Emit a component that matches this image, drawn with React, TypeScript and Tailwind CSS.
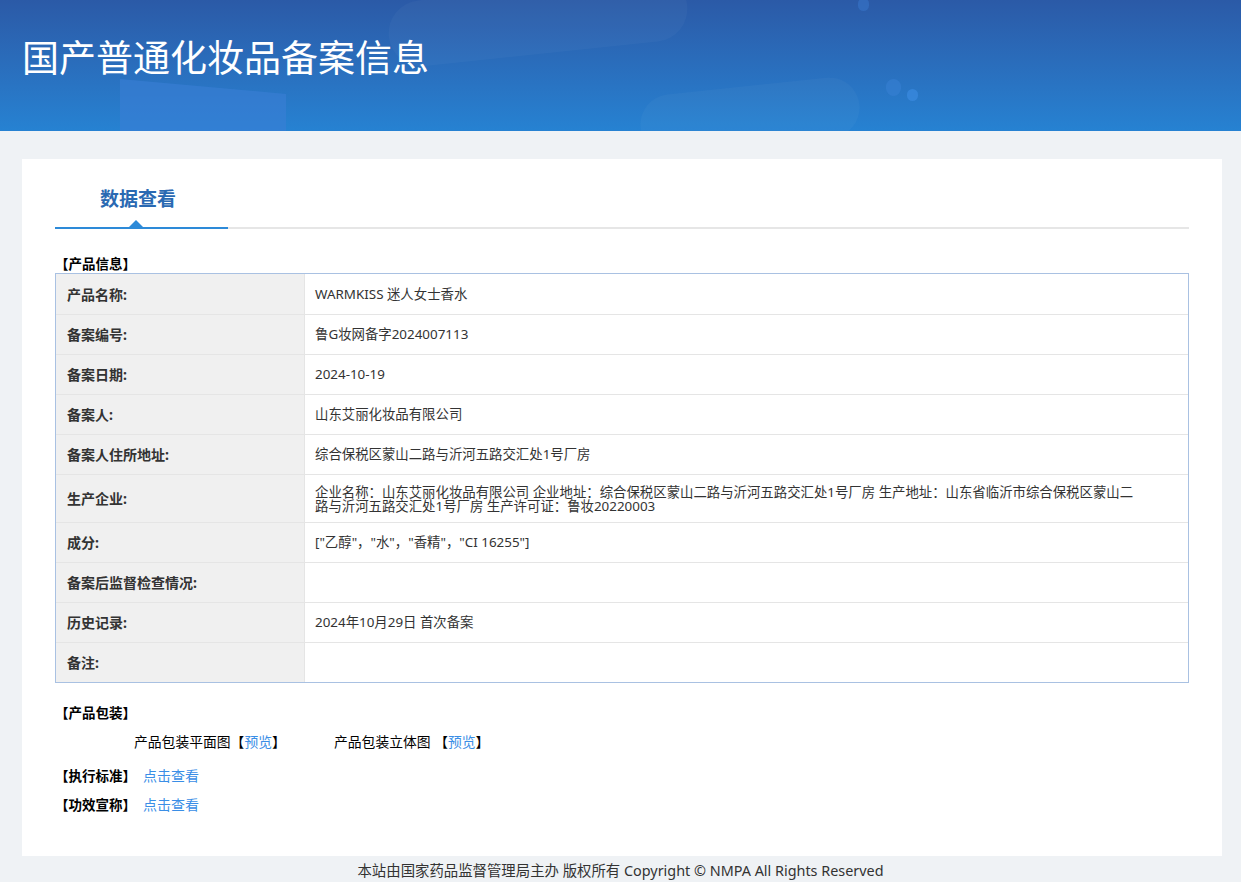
import React from "react";

const rows: { label: string; value: React.ReactNode; h?: string }[] = [
  { label: "产品名称:", value: "WARMKISS 迷人女士香水" },
  { label: "备案编号:", value: "鲁G妆网备字2024007113" },
  { label: "备案日期:", value: "2024-10-19" },
  { label: "备案人:", value: "山东艾丽化妆品有限公司" },
  { label: "备案人住所地址:", value: "综合保税区蒙山二路与沂河五路交汇处1号厂房" },
  {
    label: "生产企业:",
    value: (
      <span className="block leading-[14px]">
        企业名称：山东艾丽化妆品有限公司 企业地址：综合保税区蒙山二路与沂河五路交汇处1号厂房 生产地址：山东省临沂市综合保税区蒙山二
        <br />
        路与沂河五路交汇处1号厂房 生产许可证：鲁妆20220003
      </span>
    ),
    h: "h-[48px]",
  },
  { label: "成分:", value: '["乙醇"，"水"，"香精"，"CI 16255"]' },
  { label: "备案后监督检查情况:", value: "" },
  { label: "历史记录:", value: "2024年10月29日 首次备案" },
  { label: "备注:", value: "" },
];

export default function App() {
  return (
    <div
      className="min-h-[882px] bg-[#eff2f5] text-[#333]"
      style={{ fontFamily: '"Noto Sans", "Noto Sans CJK SC", sans-serif' }}
    >
      <header className="relative h-[131px] overflow-hidden bg-gradient-to-b from-[#2b5aa7] to-[#2682d2]">
        <div className="absolute left-[120px] top-[76px] h-[60px] w-[166px] bg-[#3b7fd6] opacity-60 [clip-path:polygon(0_5%,100%_30%,100%_100%,0_100%)]" />
        <div className="absolute left-[388px] top-[-12px] h-[66px] w-[300px] -rotate-6 rounded-full bg-white/[0.03]" />
        <div className="absolute left-[640px] top-[86px] h-[60px] w-[220px] -rotate-6 rounded-full bg-white/[0.03]" />
        <div className="absolute left-[886px] top-[79px] h-[17px] w-[15px] rounded-full bg-[#3a82d6]/50" />
        <div className="absolute left-[907px] top-[89px] h-[12px] w-[11px] rounded-full bg-[#3a8ae0]/70" />
        <div className="absolute left-[858px] top-[-2px] h-[13px] w-[11px] rounded-full bg-[#3a7ad0]/50" />
        <h1 className="relative pl-[22px] pt-[33px] text-[37px] font-normal leading-[50px] text-white">
          国产普通化妆品备案信息
        </h1>
      </header>

      <main className="ml-[22px] mt-[28px] h-[697px] w-[1200px] bg-white px-[33px] pt-[26px]">
        <div className="relative flex h-[44px] border-b-2 border-[#e6e6e6]">
          <div className="relative -mb-[2px] flex w-[173px] border-b-2 border-[#2d8ad8] pl-[45px]">
            <span className="text-[19px] font-bold leading-[28px] text-[#2a69b2]">数据查看</span>
            <span className="absolute bottom-0 left-[74px] h-0 w-0 border-x-[7px] border-b-[7px] border-x-transparent border-b-[#2d8ad8]" />
          </div>
        </div>

        <div className="mt-[26px] text-[13.5px] font-bold leading-[18px] text-black">【产品信息】</div>
        <div className="border border-[#a9c1e2]">
          {rows.map((r, i) => (
            <div
              key={i}
              className={`flex ${r.h ?? "h-[40px]"} ${i > 0 ? "border-t border-[#e5e5e5]" : ""}`}
            >
              <div className="flex w-[249px] shrink-0 items-center border-r border-[#e5e5e5] bg-[#f0f0f0] pl-[11px] text-[14px] font-bold text-[#333]">
                {r.label}
              </div>
              <div className="flex flex-1 items-center pl-[10px] text-[13.4px] text-[#333]">{r.value}</div>
            </div>
          ))}
        </div>

        <div className="mt-[21px] text-[13.5px] font-bold leading-[18px] text-black">【产品包装】</div>
        <div className="mt-[11px] flex pl-[79px] text-[13.8px] leading-[18px] text-black">
          <span className="w-[200px]">
            产品包装平面图【<span className="text-[#3a8ee6]">预览</span>】
          </span>
          <span>
            产品包装立体图 【<span className="text-[#3a8ee6]">预览</span>】
          </span>
        </div>
        <div className="mt-[16px] flex items-center text-[13.5px] leading-[18px]">
          <span className="font-bold text-black">【执行标准】</span>
          <span className="ml-[7px] text-[14px] text-[#3a8ee6]">点击查看</span>
        </div>
        <div className="mt-[11px] flex items-center text-[13.5px] leading-[18px]">
          <span className="font-bold text-black">【功效宣称】</span>
          <span className="ml-[7px] text-[14px] text-[#3a8ee6]">点击查看</span>
        </div>
      </main>

      <footer className="pt-[5px] text-center text-[14.4px] leading-[20px] text-[#333]">
        本站由国家药品监督管理局主办 版权所有 Copyright © NMPA All Rights Reserved
      </footer>
    </div>
  );
}
